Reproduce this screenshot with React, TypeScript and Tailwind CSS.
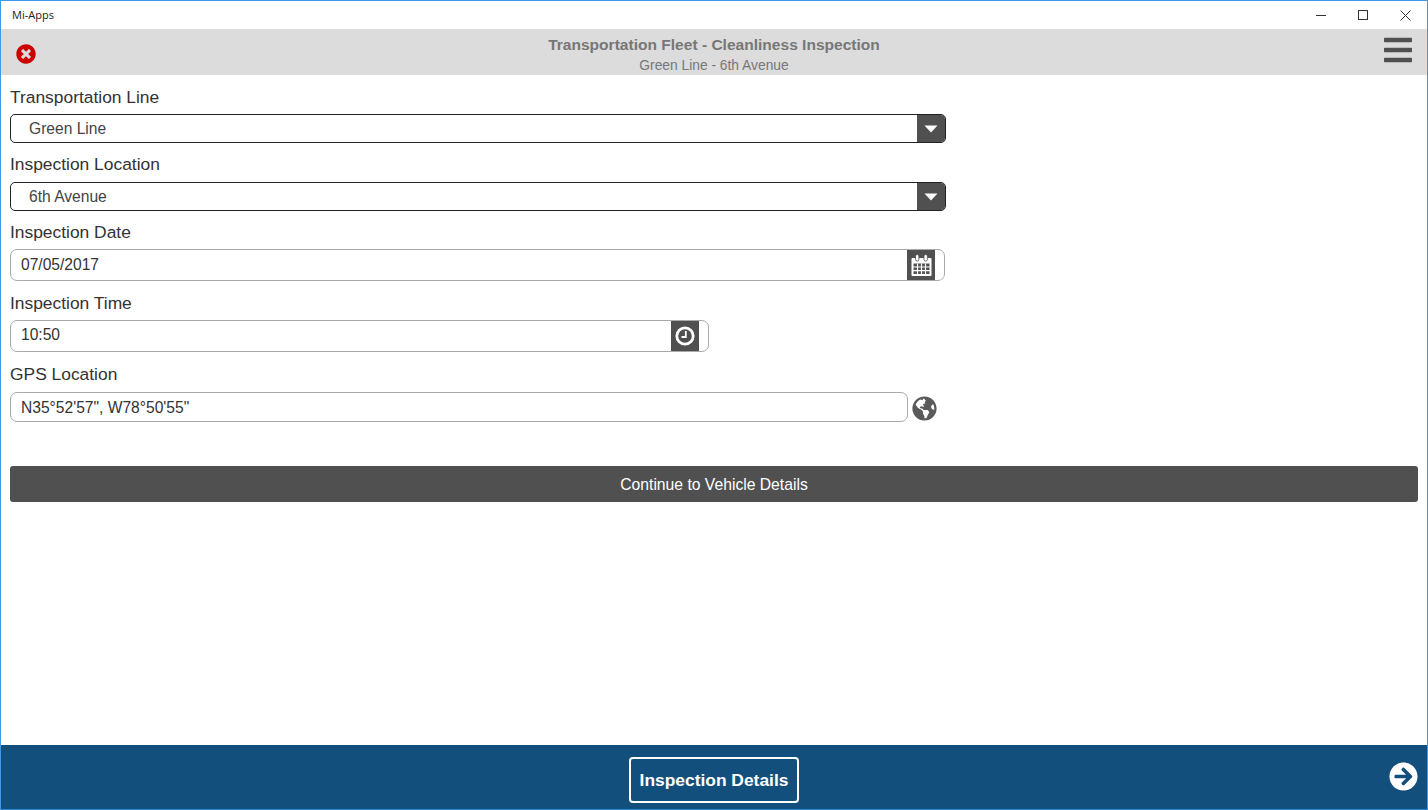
import { FaArrowCircleRight, FaBars, FaGlobeAmericas, FaTimesCircle } from "react-icons/fa";

// Window frame + title bar
function TitleBar() {
  return (
    <div className="h-[28px] bg-white flex items-center shrink-0">
      <span className="ml-[11px] text-[11px] text-[#222] font-['Open_Sans',sans-serif]">Mi-Apps</span>
      <div className="ml-auto mr-[1px] flex items-center h-full">
        <div className="w-[42px] h-full flex items-center justify-center">
          <span className="block w-[10px] h-px bg-[#333]" />
        </div>
        <div className="w-[42px] h-full flex items-center justify-center">
          <span className="block w-[10px] h-[10px] border border-[#333]" />
        </div>
        <div className="w-[42px] h-full flex items-center justify-center">
          <svg width="11" height="11" viewBox="0 0 11 11" stroke="#333" strokeWidth="1" fill="none">
            <path d="M0.5 0.5l10 10M10.5 0.5l-10 10" />
          </svg>
        </div>
      </div>
    </div>
  );
}

function CalendarIcon() {
  return (
    <svg width="21" height="23" viewBox="0 0 21 23" fill="none">
      <path d="M1.5 4h18a1 1 0 0 1 1 1v16a1 1 0 0 1-1 1h-18a1 1 0 0 1-1-1V5a1 1 0 0 1 1-1z" fill="#fff" />
      <rect x="4.5" y="0.5" width="3.4" height="6.5" rx="1.6" fill="#fff" stroke="#505050" strokeWidth="0.8" />
      <rect x="13" y="0.5" width="3.4" height="6.5" rx="1.6" fill="#fff" stroke="#505050" strokeWidth="0.8" />
      <path d="M2.5 9.5h16v10.5h-16z" fill="#505050" />
      <path d="M2 13h17M2 16.7h17M6.5 9.5v11M10.5 9.5v11M14.5 9.5v11" stroke="#fff" strokeWidth="1.2" />
    </svg>
  );
}

function ClockIcon() {
  return (
    <svg width="20" height="20" viewBox="0 0 20 20" fill="none">
      <circle cx="10" cy="10" r="8.2" stroke="#fff" strokeWidth="2.8" />
      <path d="M10.8 5v6H6.5" stroke="#fff" strokeWidth="1.8" />
    </svg>
  );
}

function Field({ label, top, children }: { label: string; top: string; children: React.ReactNode }) {
  return (
    <div>
      <div className={`${top} flex items-center text-[17.4px] text-[#333]`}>{label}</div>
      {children}
    </div>
  );
}

function SelectBox({ value }: { value: string }) {
  return (
    <div className="w-[936px] h-[29px] border border-[#222] rounded-[5px] overflow-hidden flex items-center bg-white">
      <span className="pl-[18px] text-[15.6px] text-[#444] flex-1">{value}</span>
      <div className="w-[28px] h-full bg-[#505050] flex items-center justify-center">
        <svg width="14" height="8" viewBox="0 0 14 8">
          <path d="M0.5 0.5h13L7 7.5z" fill="#fff" />
        </svg>
      </div>
    </div>
  );
}

function InputBox({ value, width, textPad, children }: { value: string; width: string; textPad: string; children: React.ReactNode }) {
  return (
    <div className={`${width} h-[32px] border border-[#aaa] rounded-[7px] overflow-hidden flex items-center bg-white pr-[9px]`}>
      <span className={`pl-[10px] ${textPad} text-[15.6px] text-[#333] flex-1`}>{value}</span>
      <div className="w-[28px] h-full bg-[#505050] flex items-center justify-center">{children}</div>
    </div>
  );
}

export default function App() {
  return (
    <div className="w-[1428px] h-[810px] border border-[#3d9be9] border-b-[#2b8ad8] bg-white flex flex-col overflow-hidden font-['Liberation_Sans',Arial,sans-serif]">
      <TitleBar />

      {/* Header */}
      <header className="h-[46px] bg-[#dcdcdc] shrink-0 flex items-center relative">
        <FaTimesCircle className="absolute left-[15px] top-[15px] w-[20px] h-[20px] text-[#cc0000]" />
        <div className="w-full text-center pt-[8px]">
          <div className="text-[15.55px] leading-[20px] font-bold text-[#777]">Transportation Fleet - Cleanliness Inspection</div>
          <div className="text-[13.8px] leading-[22px] text-[#777]">Green Line - 6th Avenue</div>
        </div>
        <FaBars className="absolute left-[1383px] top-[5px] w-[28px] h-[32px] text-[#505050]" />
      </header>

      {/* Form */}
      <main className="flex-1 px-[9px]">
        <Field label="Transportation Line" top="h-[39px] pt-[5px]">
          <SelectBox value="Green Line" />
        </Field>
        <Field label="Inspection Location" top="h-[39px] pt-[4px]">
          <SelectBox value="6th Avenue" />
        </Field>
        <Field label="Inspection Date" top="h-[38px] pt-[4px]">
          <InputBox value="07/05/2017" width="w-[935px]" textPad="pb-[1px]">
            <CalendarIcon />
          </InputBox>
        </Field>
        <Field label="Inspection Time" top="h-[39px] pt-[6px]">
          <InputBox value="10:50" width="w-[699px]" textPad="pb-[3px]">
            <ClockIcon />
          </InputBox>
        </Field>
        <Field label="GPS Location" top="h-[40px] pt-[4px]">
          <div className="flex items-center">
            <div className="w-[898px] h-[30px] border border-[#aaa] rounded-[7px] flex items-center bg-white">
              <span className="pl-[10px] pt-[1px] text-[15.6px] text-[#333]">N35°52'57", W78°50'55"</span>
            </div>
            <FaGlobeAmericas className="ml-[4px] mt-[2px] w-[25px] h-[25px] text-[#5a5a5a]" />
          </div>
        </Field>
        <button className="mt-[44px] w-[1408px] h-[36px] bg-[#505050] rounded-[3px] text-white text-[15.7px] pt-[1px] flex items-center justify-center">
          Continue to Vehicle Details
        </button>
      </main>

      {/* Footer */}
      <footer className="h-[64px] bg-[#134f7c] shrink-0 flex items-center justify-center relative pt-[6px]">
        <div className="w-[170px] h-[46px] border-2 border-white rounded-[4px] flex items-center justify-center text-white font-bold text-[17.4px]">
          Inspection Details
        </div>
        <FaArrowCircleRight className="absolute left-[1388px] top-[17px] w-[29px] h-[29px] text-white" />
      </footer>
    </div>
  );
}
